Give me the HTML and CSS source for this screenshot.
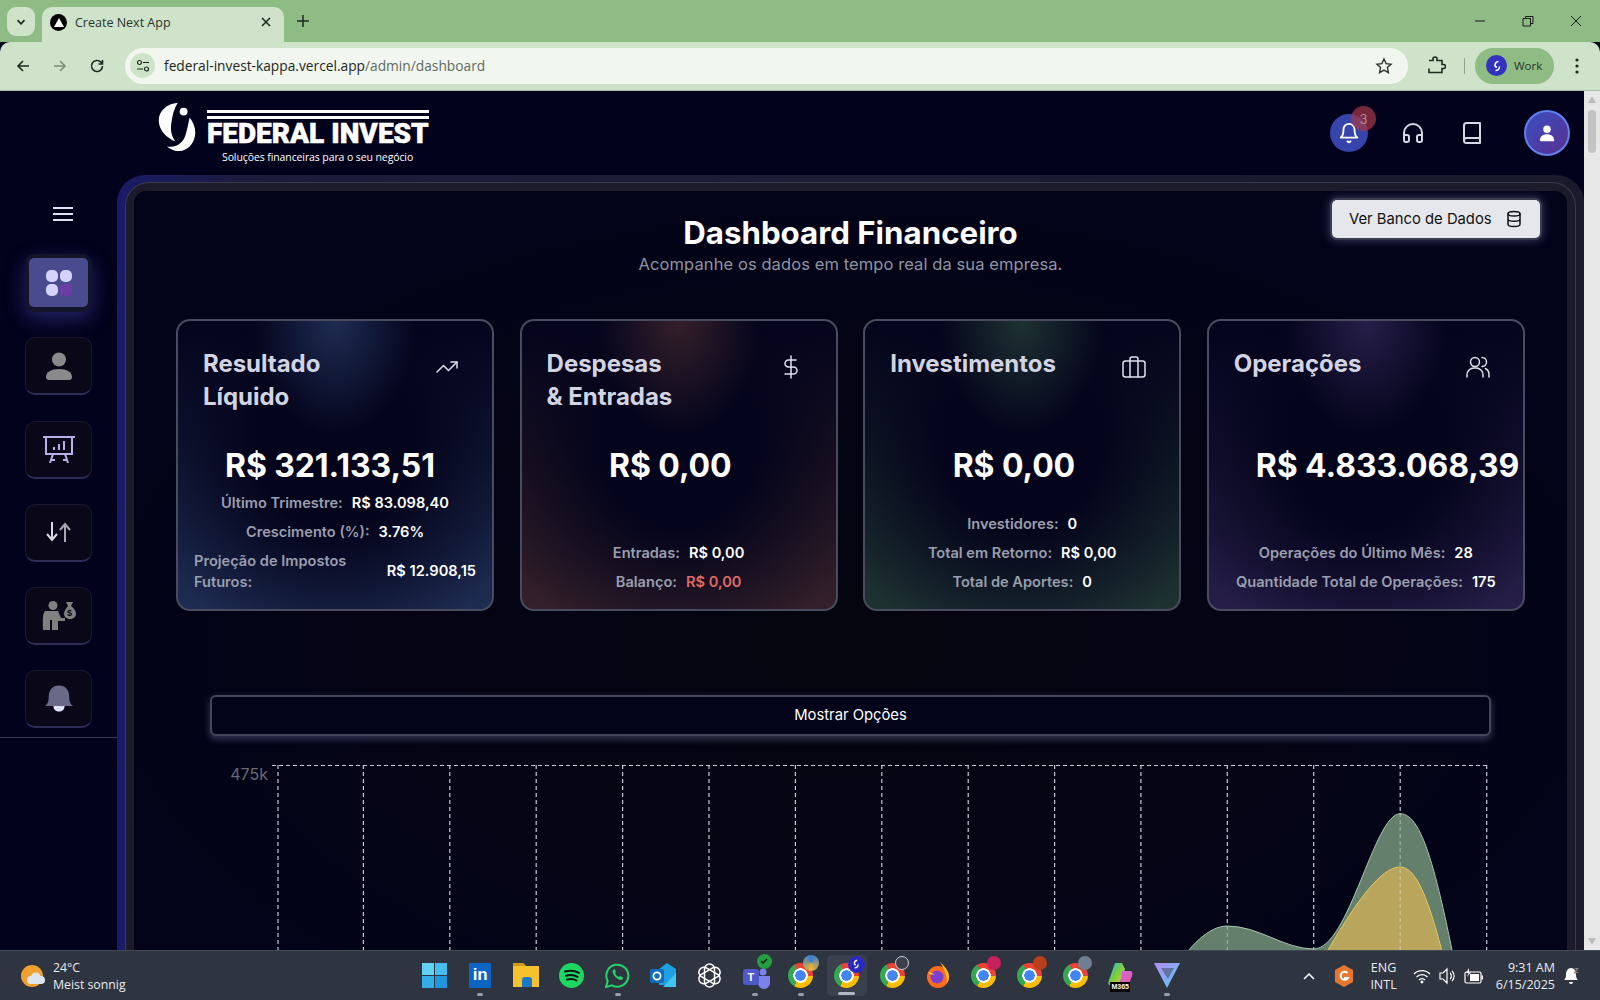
FILE: index.html
```html
<!DOCTYPE html>
<html lang="pt-BR">
<head>
<meta charset="utf-8">
<title>Create Next App</title>
<link rel="stylesheet" href="styles.css">
</head>
<body>
<div class="tabstrip">
  <div class="tab-switch"><svg width="12" height="12" viewBox="0 0 12 12"><path d="M2.500 4.200 6 7.800l3.500-3.600" fill="none" stroke="#1f2a1f" stroke-width="1.700"/></svg></div>
  <div class="tab">
    <span class="favicon"><svg width="10" height="9" viewBox="0 0 10 9"><path d="M5 0l5 9H0z" fill="#fff"/></svg></span>
    <span class="tab-title">Create Next App</span>
    <svg class="tab-close" width="10" height="10" viewBox="0 0 10 10"><path d="M1 1l8 8M9 1l-8 8" stroke="#1d2a1d" stroke-width="1.600"/></svg>
  </div>
  <svg class="tab-plus" width="12" height="12" viewBox="0 0 12 12"><path d="M6 0v12M0 6h12" stroke="#1d2a1d" stroke-width="1.500"/></svg>
  <div class="win-controls">
    <svg width="12" height="12" viewBox="0 0 12 12"><path d="M1 6h10" stroke="#1a1a1a" stroke-width="1"/></svg>
    <svg width="12" height="12" viewBox="0 0 12 12"><path d="M1 3.500h7.500V11H1z M3.500 3.500V1.500H11V8.500H8.500" fill="none" stroke="#1a1a1a" stroke-width="1"/></svg>
    <svg width="12" height="12" viewBox="0 0 12 12"><path d="M1 1l10 10M11 1L1 11" stroke="#1a1a1a" stroke-width="1"/></svg>
  </div>
</div>
<div class="toolbar">
  <svg class="nav-icon" width="16" height="16" viewBox="0 0 16 16"><path d="M14 8H3M8 3L3 8l5 5" fill="none" stroke="#1f2a1f" stroke-width="1.600"/></svg>
  <svg class="nav-icon" width="16" height="16" viewBox="0 0 16 16"><path d="M2 8h11M8 3l5 5-5 5" fill="none" stroke="#7d8f7a" stroke-width="1.600"/></svg>
  <svg class="nav-icon" width="16" height="16" viewBox="0 0 16 16"><path d="M13.500 8a5.500 5.500 0 1 1-1.600-3.900L13.500 6M13.500 2v4h-4" fill="none" stroke="#1f2a1f" stroke-width="1.600"/></svg>
  <div class="urlbar">
    <span class="site-info"><svg width="14" height="14" viewBox="0 0 14 14"><circle cx="3.500" cy="3.500" r="2" fill="none" stroke="#1f2a1f" stroke-width="1.200"/><path d="M7 3.500h6M1 10h6" stroke="#1f2a1f" stroke-width="1.200"/><circle cx="10.500" cy="10" r="2" fill="none" stroke="#1f2a1f" stroke-width="1.200"/></svg></span>
    <span class="url"><span class="url-host">federal-invest-kappa.vercel.app</span><span class="url-path">/admin/dashboard</span></span>
    <svg class="star" width="18" height="18" viewBox="0 0 18 18"><path d="M9 2l2.100 4.600 5 .6-3.700 3.400 1 5L9 13.100 4.600 15.600l1-5L1.900 7.200l5-.6z" fill="none" stroke="#2a352a" stroke-width="1.400"/></svg>
  </div>
  <svg class="puzzle" width="20" height="20" viewBox="0 0 20 20"><path d="M3 5h4V3.500a2 2 0 0 1 4 0V5h5v4h1.500a2 2 0 0 1 0 4H16v4H3v-4" fill="none" stroke="#1f2a1f" stroke-width="1.600" transform="translate(0 -.5)"/></svg>
  <span class="tool-sep"></span>
  <div class="work-pill">
    <span class="work-avatar"><svg width="12" height="12" viewBox="0 0 12 12"><path d="M7.500 1.500A4 4 0 0 0 4 5.500c0 1 1 1.500 2 1.500M4.500 10.500A4 4 0 0 0 8.500 6.500" fill="none" stroke="#fff" stroke-width="1.600"/></svg></span>
    <span class="work-text">Work</span>
  </div>
  <svg class="dots" width="4" height="16" viewBox="0 0 4 16"><circle cx="2" cy="2" r="1.600" fill="#1f2a1f"/><circle cx="2" cy="8" r="1.600" fill="#1f2a1f"/><circle cx="2" cy="14" r="1.600" fill="#1f2a1f"/></svg>
</div>

<div class="viewport">
  <div class="page">
    <header class="topbar">
      <div class="logo">
        <svg class="logo-mark" width="40" height="53" viewBox="20 30 120 160">
          <path d="M82 35C50 38 24 60 25 90c1 30 24 50 50 62-13-17-15-36-12-56 3-22 8-43 19-61z" fill="#fff"/>
          <path d="M118 80c16 20 22 44 13 67-13 33-48 47-82 20 32 6 52-14 58-38 4-16 8-32 11-49z" fill="#fff"/>
          <circle cx="100" cy="62" r="12" fill="#fff"/>
        </svg>
        <div class="logo-text">
          <span class="logo-bar"></span>
          <span class="logo-bar"></span>
          <span class="logo-name">FEDERAL INVEST</span>
          <span class="logo-tag">Soluções financeiras para o seu negócio</span>
        </div>
      </div>
      <div class="top-actions">
        <div class="bell-btn">
          <svg width="22" height="22" viewBox="0 0 24 24" fill="none" stroke="#fff" stroke-width="2" stroke-linecap="round" stroke-linejoin="round"><path d="M6 8a6 6 0 0 1 12 0c0 7 3 9 3 9H3s3-2 3-9"/><path d="M10.300 21a1.900 1.900 0 0 0 3.400 0"/></svg>
          <span class="bell-badge">3</span>
        </div>
        <svg class="act-head" width="24" height="24" viewBox="0 0 24 24" fill="none" stroke="#d5d8e6" stroke-width="2" stroke-linecap="round" stroke-linejoin="round"><path d="M3 14h3a2 2 0 0 1 2 2v3a2 2 0 0 1-2 2H5a2 2 0 0 1-2-2v-7a9 9 0 0 1 18 0v7a2 2 0 0 1-2 2h-1a2 2 0 0 1-2-2v-3a2 2 0 0 1 2-2h3"/></svg>
        <svg class="act-book" width="24" height="24" viewBox="0 0 24 24" fill="none" stroke="#d5d8e6" stroke-width="2" stroke-linecap="round" stroke-linejoin="round"><path d="M4 19.500v-15A2.500 2.500 0 0 1 6.500 2H20v20H6.500a2.500 2.500 0 0 1 0-5H20"/></svg>
        <div class="avatar"><svg width="20" height="20" viewBox="0 0 24 24" fill="#fff"><circle cx="12" cy="7.500" r="4.500"/><path d="M3.500 21c0-5 3.500-7.500 8.500-7.500s8.500 2.500 8.500 7.500c0 .5-.5 1-1 1h-15c-.5 0-1-.5-1-1z"/></svg></div>
      </div>
    </header>

    <div class="workspace">
      <nav class="sidebar">
        <svg class="burger" width="20" height="16" viewBox="0 0 20 16"><path d="M0 2h20M0 8h20M0 14h20" stroke="#dfe2f2" stroke-width="2"/></svg>
        <div class="side-list">
          <div class="side-btn side-btn-active">
            <div class="side-active-inner">
              <svg width="26" height="26" viewBox="0 0 26 26"><rect x="0" y="0" width="12" height="12" rx="5" fill="#d6d2ff"/><rect x="14" y="0" width="12" height="12" rx="5" fill="#d6d2ff"/><rect x="0" y="14" width="12" height="12" rx="5" fill="#d6d2ff"/><rect x="14" y="14" width="12" height="12" rx="4" fill="#6a3ea6"/></svg>
            </div>
          </div>
          <div class="side-btn"><svg width="26" height="28" viewBox="0 0 26 28" fill="#8a8a8a"><circle cx="13" cy="7.500" r="7"/><path d="M0 25c0-5 5-8 13-8s13 3 13 8c0 2-1 3-3 3H3c-2 0-3-1-3-3z"/></svg></div>
          <div class="side-btn"><svg width="32" height="27" viewBox="0 0 32 27" fill="none" stroke="#b8b0ea" stroke-width="2"><path d="M0 1h32M3 1v17h26V1M10 18l-3 9M22 18l3 9M8 24h4M20 24h4"/><path d="M11 14v-3M16 14V8M21 14V5" stroke-width="2"/></svg></div>
          <div class="side-btn"><svg width="25" height="20" viewBox="0 0 25 20" fill="none" stroke-width="2"><path d="M6 0v18M1 12l5 6 5-6" stroke="#d8d8e0"/><path d="M19 20V2M14 8l5-6 5 6" stroke="#a9a9b2"/></svg></div>
          <div class="side-btn"><svg width="34" height="29" viewBox="0 0 34 29"><circle cx="11" cy="4.500" r="4.500" fill="#808080"/><path d="M3 10h13l3 7h4v3h-7v9H10V19H8v10H1c0-7-1-16 2-19z" fill="#808080"/><path d="M24 1h7l-2 4c3 2 5 5 5 8 0 3-3 5-6 5s-6-2-6-5c0-3 2-6 4-8z" fill="#808080"/><text x="27.500" y="15" class="bag-text">$</text></svg></div>
          <div class="side-btn"><svg width="28" height="27" viewBox="0 0 30 28"><path d="M15 0c7 0 11 5 11 12 0 5 1 8 4 10H0c3-2 4-5 4-10C4 5 8 0 15 0z" fill="#6a6a88"/><path d="M9 22h12c0 4-3 6-6 6s-6-2-6-6z" fill="#dfe4ff"/></svg></div>
        </div>
        <div class="side-rule"></div>
      </nav>

      <section class="panel">
        <div class="frame">
          <main class="inner">
            <div class="title-row">
              <span></span>
              <div class="title-block">
                <h1 class="title">Dashboard Financeiro</h1>
                <p class="subtitle">Acompanhe os dados em tempo real da sua empresa.</p>
              </div>
              <button class="db-btn">Ver Banco de Dados
                <svg width="18" height="18" viewBox="0 0 24 24" fill="none" stroke="#111" stroke-width="2" stroke-linecap="round"><ellipse cx="12" cy="5" rx="8" ry="3"/><path d="M4 5v14c0 1.700 3.600 3 8 3s8-1.300 8-3V5M4 12c0 1.700 3.600 3 8 3s8-1.300 8-3"/></svg>
              </button>
            </div>

            <div class="cards">
              <article class="card card-blue">
                <div class="card-head">
                  <h2 class="card-title">Resultado<br>Líquido</h2>
                  <svg class="card-icon" width="24" height="24" viewBox="0 0 24 24" fill="none" stroke="#e0e2ee" stroke-width="1.500" stroke-linecap="round" stroke-linejoin="round"><path d="M22 7l-8.500 8.500-5-5L2 17"/><path d="M16 7h6v6"/></svg>
                </div>
                <div class="card-value value-wide">R$ 321.133,51</div>
                <div class="rows">
                  <div class="row"><span class="lbl">Último Trimestre:</span><span class="val">R$ 83.098,40</span></div>
                  <div class="row"><span class="lbl">Crescimento (%):</span><span class="val">3.76%</span></div>
                  <div class="row row-split"><span class="lbl">Projeção de Impostos<br>Futuros:</span><span class="val">R$ 12.908,15</span></div>
                </div>
              </article>

              <article class="card card-red">
                <div class="card-head">
                  <h2 class="card-title">Despesas<br>&amp; Entradas</h2>
                  <svg class="card-icon" width="24" height="24" viewBox="0 0 24 24" fill="none" stroke="#e0e2ee" stroke-width="1.500" stroke-linecap="round" stroke-linejoin="round"><path d="M12 1v22"/><path d="M17 5H9.500a3.500 3.500 0 0 0 0 7h5a3.500 3.500 0 0 1 0 7H6"/></svg>
                </div>
                <div class="card-value value-short">R$ 0,00</div>
                <div class="rows">
                  <div class="row"><span class="lbl">Entradas:</span><span class="val">R$ 0,00</span></div>
                  <div class="row"><span class="lbl">Balanço:</span><span class="val val-neg">R$ 0,00</span></div>
                </div>
              </article>

              <article class="card card-green">
                <div class="card-head">
                  <h2 class="card-title">Investimentos</h2>
                  <svg class="card-icon" width="24" height="24" viewBox="0 0 24 24" fill="none" stroke="#e0e2ee" stroke-width="1.500" stroke-linecap="round" stroke-linejoin="round"><rect x="1" y="6" width="22" height="16" rx="2.500"/><path d="M16 22V4a2 2 0 0 0-2-2h-4a2 2 0 0 0-2 2v18"/></svg>
                </div>
                <div class="card-value value-short">R$ 0,00</div>
                <div class="rows">
                  <div class="row"><span class="lbl">Investidores:</span><span class="val">0</span></div>
                  <div class="row"><span class="lbl">Total em Retorno:</span><span class="val">R$ 0,00</span></div>
                  <div class="row"><span class="lbl">Total de Aportes:</span><span class="val">0</span></div>
                </div>
              </article>

              <article class="card card-purple">
                <div class="card-head">
                  <h2 class="card-title">Operações</h2>
                  <svg class="card-icon" width="24" height="24" viewBox="0 0 24 24" fill="none" stroke="#e0e2ee" stroke-width="1.500" stroke-linecap="round" stroke-linejoin="round"><circle cx="9" cy="7" r="4.500"/><path d="M1 22v-2a7 7 0 0 1 7-7h2a7 7 0 0 1 7 7v2"/><path d="M16 2.500a4.500 4.500 0 0 1 0 9"/><path d="M19.500 13.500A7 7 0 0 1 23 20v2"/></svg>
                </div>
                <div class="card-value value-wide">R$ 4.833.068,39</div>
                <div class="rows">
                  <div class="row"><span class="lbl">Operações do Último Mês:</span><span class="val">28</span></div>
                  <div class="row"><span class="lbl">Quantidade Total de Operações:</span><span class="val">175</span></div>
                </div>
              </article>
            </div>

            <button class="options-btn">Mostrar Opções</button>

            <svg class="chart" width="1433" height="300" viewBox="0 0 1433 300">
              <path d="M138 14.500H1352.700" class="grid-line"/>
              <path d="M144 14V300M229.400 14V300M315.800 14V300M402.200 14V300M488.600 14V300M575 14V300M661.400 14V300M747.800 14V300M834.200 14V300M920.600 14V300M1006.900 14V300M1093.300 14V300M1179.700 14V300M1266.200 14V300M1352.700 14V300" class="grid-line"/>
              <text x="134" y="29" class="axis-label">475k</text>
              <path d="M1040 220C1055 195 1075 175 1093.300 175C1125 175 1150 198 1179.700 198C1215 198 1240 62.700 1266.200 62.700C1290 62.700 1305 130 1330 260V300H1040Z" class="area-green"/>
              <path d="M1170 240C1205 180 1240 116 1266.200 116C1285 116 1300 160 1322 260L1330 300H1170Z" class="area-yellow"/>
              <path d="M1093.300 175V300M1179.700 198V300M1266.200 62V300" class="grid-line grid-faint"/>
            </svg>
          </main>
        </div>
      </section>
    </div>
  </div>
  <div class="scrollbar">
    <span class="scroll-up"></span>
    <span class="scroll-thumb"></span>
    <span class="scroll-down"></span>
  </div>
</div>

<footer class="taskbar">
  <div class="weather">
    <svg width="26" height="26" viewBox="0 0 26 26"><circle cx="12" cy="13" r="11" fill="#f0a030"/><path d="M11 21a4 4 0 0 1 0-8 5 5 0 0 1 9.500 0 4 4 0 0 1 1 8z" fill="#dfe5ef"/></svg>
    <div class="weather-text"><span>24°C</span><span>Meist sonnig</span></div>
  </div>
  <div class="task-icons">
    <div class="task-cell"><svg width="25" height="25" viewBox="0 0 25 25"><path d="M0 0h12v12H0z" fill="#63d1f5"/><path d="M13 0h12v12H13z" fill="#45bdf0"/><path d="M0 13h12v12H0z" fill="#32ade8"/><path d="M13 13h12v12H13z" fill="#1f97dd"/></svg></div>
    <div class="task-cell task-open"><span class="tile-in">in</span></div>
    <div class="task-cell"><svg width="26" height="24" viewBox="0 0 26 24"><path d="M0 0h10l3 3h13v21H0z" fill="#f5c22e"/><path d="M0 0h10l3 3H0z" fill="#d49a1a"/><path d="M9 17q0-3 3-3h4q3 0 3 3v7H9z" fill="#1b78c8"/></svg></div>
    <div class="task-cell"><svg width="25" height="25" viewBox="0 0 25 25"><circle cx="12.500" cy="12.500" r="12.500" fill="#1ed760"/><path d="M6 8.500c5-1.300 10-1 14 1.300M7 12.700c4-1 8.500-.6 11.500 1.200M8 16.500c3.500-.8 7-.5 9.500 1" fill="none" stroke="#111" stroke-width="2" stroke-linecap="round"/></svg></div>
    <div class="task-cell task-open"><svg width="25" height="25" viewBox="0 0 25 25"><path d="M1 24l1.700-6A11 11 0 1 1 7 22.300z" fill="none" stroke="#25d366" stroke-width="2"/><path d="M8 7c-1 2 0 5 3 7.500s5 3 6.500 2l.5-2-3-1.500-1 1c-2-.8-3-2-4-4l1-1-1.300-3z" fill="#25d366"/></svg></div>
    <div class="task-cell"><svg width="26" height="24" viewBox="0 0 26 24"><path d="M9 6l8-6 9 6v16H9z" fill="#1fa0e0"/><path d="M13 24h13V10z" fill="#41c5f2"/><rect x="0" y="6" width="14" height="14" rx="2" fill="#0f6cbd"/><circle cx="7" cy="13" r="3.600" fill="none" stroke="#fff" stroke-width="1.800"/></svg></div>
    <div class="task-cell"><svg width="25" height="25" viewBox="0 0 25 25" fill="none" stroke="#fff" stroke-width="1.500"><rect x="7.500" y="1" width="10" height="23" rx="5"/><rect x="7.500" y="1" width="10" height="23" rx="5" transform="rotate(60 12.500 12.500)"/><rect x="7.500" y="1" width="10" height="23" rx="5" transform="rotate(120 12.500 12.500)"/></svg></div>
    <div class="task-cell task-open"><svg class="teams-back" width="24" height="22" viewBox="0 0 24 22"><circle cx="17" cy="5" r="3.500" fill="#7b83eb"/><path d="M9 9h15v7a6 6 0 0 1-12 0z" fill="#7b83eb"/></svg><span class="tile-teams">T</span><span class="teams-check"><svg width="10" height="10" viewBox="0 0 10 10"><path d="M2 5l2 2 4-4" fill="none" stroke="#111" stroke-width="1.300"/></svg></span></div>
    <div class="task-cell task-open"><span class="chrome"></span><span class="mini-badge badge-multi"></span></div>
    <div class="task-cell task-open task-active"><span class="chrome"></span><span class="mini-badge badge-work"><svg width="10" height="10" viewBox="0 0 12 12"><path d="M7.500 1.500A4 4 0 0 0 4 5.500c0 1 1 1.500 2 1.500M4.500 10.500A4 4 0 0 0 8.500 6.500" fill="none" stroke="#fff" stroke-width="1.600"/></svg></span></div>
    <div class="task-cell"><span class="chrome"></span><span class="mini-badge badge-grey"></span></div>
    <div class="task-cell"><svg width="24" height="26" viewBox="0 0 24 26"><circle cx="12" cy="15" r="11" fill="#ff6b1a"/><path d="M14 0c4 4 9 8 9 15 0 3-1 5-2 6 0-8-3-14-7-21z" fill="#ffb62e"/><circle cx="11" cy="15" r="6.500" fill="#7b3fd1"/><path d="M2 10c3 0 4 2 7 2-2 1-5 1-7-2z" fill="#ffd23e"/></svg></div>
    <div class="task-cell"><span class="chrome"></span><span class="mini-badge badge-pink"></span></div>
    <div class="task-cell"><span class="chrome"></span><span class="mini-badge badge-rust"></span></div>
    <div class="task-cell"><span class="chrome"></span><span class="mini-badge badge-arrow"></span></div>
    <div class="task-cell"><svg width="26" height="24" viewBox="0 0 26 24"><defs><linearGradient id="cp" x1="0" y1="0" x2="1" y2="1"><stop offset="0" stop-color="#19b5e8"/><stop offset=".5" stop-color="#7bcf3f"/><stop offset="1" stop-color="#f5c63a"/></linearGradient><linearGradient id="cq" x1="0" y1="0" x2="1" y2="1"><stop offset="0" stop-color="#c76be0"/><stop offset="1" stop-color="#f2559e"/></linearGradient></defs><path d="M7 0h7l3 6-6 16H2C0 22 0 20 1 17z" fill="url(#cp)"/><path d="M14 8h8c2 0 3 2 2 5l-3 8h-9z" fill="url(#cq)"/></svg><span class="m365">M365</span></div>
    <div class="task-cell task-open"><svg width="26" height="26" viewBox="0 0 26 26"><defs><linearGradient id="vg" x1="0" y1="0" x2="1" y2="1"><stop offset="0" stop-color="#b48cf5"/><stop offset="1" stop-color="#5cc8f5"/></linearGradient></defs><path d="M0 1h26L13 26z" fill="url(#vg)"/><path d="M7 6h13l-6 11z" fill="#2e3440" opacity=".45"/></svg></div>
  </div>
  <div class="tray">
    <svg class="tray-chev" width="12" height="8" viewBox="0 0 12 8"><path d="M1 7l5-5 5 5" fill="none" stroke="#fff" stroke-width="1.500"/></svg>
    <svg class="tray-orange" width="18" height="22" viewBox="0 0 18 22"><path d="M9 0l9 5v12l-9 5-9-5V5z" fill="#e8772e"/><path d="M12.500 8A4 4 0 1 0 13 13H9" fill="none" stroke="#fff" stroke-width="2"/></svg>
    <div class="tray-lang"><span>ENG</span><span>INTL</span></div>
    <svg class="tray-wifi" width="18" height="16" viewBox="0 0 18 16" fill="none" stroke="#fff" stroke-width="1.300"><path d="M1 6a11 11 0 0 1 16 0M3.500 9a7.500 7.500 0 0 1 11 0M6 12a4 4 0 0 1 6 0"/><circle cx="9" cy="14" r=".8" fill="#fff"/></svg>
    <svg class="tray-sound" width="18" height="18" viewBox="0 0 18 18" fill="none" stroke="#fff" stroke-width="1.200"><path d="M1 6h3l4-4v14l-4-4H1zM11 6a4 4 0 0 1 0 6M13 4a7 7 0 0 1 0 10"/></svg>
    <svg class="tray-batt" width="20" height="18" viewBox="0 0 20 18"><rect x="1" y="5" width="16" height="11" rx="1.500" fill="none" stroke="#fff" stroke-width="1.200"/><rect x="6" y="7" width="9" height="7" fill="#fff"/><path d="M17.500 8.500h1.500v4h-1.500" fill="#fff"/><path d="M5 1L2 6h2.500L3 10l4-5H5z" fill="#fff"/></svg>
    <div class="tray-clock"><span>9:31 AM</span><span>6/15/2025</span></div>
    <svg class="tray-bell" width="18" height="20" viewBox="0 0 18 20"><path d="M8 2C4 2 3 6 3 9c0 3-1 4-2 5h14c-1-1-2-2-2-5 0-3-1-7-5-7z" fill="#fff"/><path d="M6 16h4a2 2 0 0 1-4 0z" fill="#fff"/><text x="11" y="7" class="zz-text">Z</text></svg>
  </div>
</footer>
</body>
</html>
```
FILE: styles.css
```css
* { box-sizing: border-box; }
html, body { margin: 0; height: 100%; }
body {
  width: 1600px; height: 1000px; overflow: hidden;
  display: flex; flex-direction: column;
  font-family: Inter, "Liberation Sans", sans-serif;
  background: #02021a;
}

/* browser chrome */
.tabstrip {
  height: 42px; flex: none; background: #8fbc85;
  display: flex; align-items: flex-end; padding-left: 7px;
  font-family: "Open Sans", "Liberation Sans", sans-serif;
}
.tab-switch {
  width: 28px; height: 29px; margin-bottom: 6px; border-radius: 9px;
  background: #cfe3cb; display: flex; align-items: center; justify-content: center;
}
.tab {
  width: 242px; height: 35px; margin-left: 7px; background: #cfe3cb;
  border-radius: 10px 10px 0 0; display: flex; align-items: center;
  padding: 0 13px 5px 8px;
}
.favicon {
  width: 17px; height: 17px; border-radius: 50%; background: #000;
  display: flex; align-items: center; justify-content: center;
}
.tab-title { font-size: 12.500px; color: #2b342b; margin-left: 8px; flex: 1; }
.tab-plus { margin: 0 0 15px 13px; }
.win-controls { margin-left: auto; display: flex; gap: 36px; padding-right: 18px; margin-bottom: 15px; }

.toolbar {
  height: 49px; flex: none; background: #cfe3cb; border-bottom: 1px solid #a9bda6;
  display: flex; align-items: center; padding: 0 0 1px 15px;
  border-radius: 10px 10px 0 0;
  font-family: "Open Sans", "Liberation Sans", sans-serif;
}
.nav-icon { margin-right: 21px; }
.nav-icon:nth-child(3) { margin-right: 20px; }
.urlbar {
  width: 1283px; height: 36px; border-radius: 18px; background: #f1f7ef;
  display: flex; align-items: center; padding: 0 15px 0 5px;
}
.site-info {
  width: 25px; height: 25px; border-radius: 50%; background: #cfe3cb;
  display: flex; align-items: center; justify-content: center;
}
.url { margin-left: 9px; font-size: 13.750px; flex: 1; }
.url-host { color: #1e261e; }
.url-path { color: #5e6b5e; }
.puzzle { margin-left: 18px; }
.tool-sep { width: 1px; height: 16px; background: #8fa48c; margin-left: 18px; }
.work-pill {
  width: 79px; height: 36px; border-radius: 18px; background: #8fbc85; margin-left: 10px;
  display: flex; align-items: center; padding-left: 11px; gap: 7px;
}
.work-avatar {
  width: 21px; height: 21px; border-radius: 50%; background: #3232bf;
  display: flex; align-items: center; justify-content: center;
}
.work-text { font-size: 11.500px; color: #2a332a; }
.dots { margin-left: 21px; }

/* viewport */
.viewport { flex: none; height: 859px; display: flex; overflow: hidden; }
.page { flex: 1; min-width: 0; display: flex; flex-direction: column; background: #02021c; overflow: hidden; }
.scrollbar { width: 16px; flex: none; background: #e7e7e7; display: flex; flex-direction: column; align-items: center; }
.scroll-up, .scroll-down { width: 0; height: 0; border-left: 4.500px solid transparent; border-right: 4.500px solid transparent; }
.scroll-up { border-bottom: 7px solid #bdbdbd; margin-top: 5px; }
.scroll-thumb { width: 8px; height: 43px; border-radius: 4px; background: #c3c3c3; margin-top: 7px; }
.scroll-down { border-top: 7px solid #bdbdbd; margin-top: auto; margin-bottom: 5px; }

/* header */
.topbar { height: 84px; flex: none; display: flex; justify-content: space-between; padding: 9px 14px 0 157px; }
.logo { display: flex; gap: 10px; }
.logo-mark { margin-top: 1px; }
.logo-text { display: flex; flex-direction: column; width: 222px; padding-top: 10px; }
.logo-bar { height: 3px; background: #fff; margin-bottom: 3px; }
.logo-name {
  font-family: Roboto, "Liberation Sans", sans-serif; font-weight: 900; font-size: 28px; line-height: 24px;
  color: #fff; white-space: nowrap; -webkit-text-stroke: .5px #fff;
}
.logo-tag {
  font-family: "Open Sans", sans-serif; font-size: 10.500px; line-height: 14px; color: #fff; white-space: nowrap;
  margin: 4px 0 0 15px; letter-spacing: -.1px;
}
.top-actions { display: flex; align-items: center; height: 46px; margin-top: 10px; }
.bell-btn {
  width: 38px; height: 38px; border-radius: 50%; background: #3645ac; position: relative;
  display: flex; align-items: center; justify-content: center;
}
.bell-badge {
  position: absolute; right: -8px; top: -8px; width: 25px; height: 25px; border-radius: 50%;
  background: rgba(165, 55, 70, .72); color: #b08a98; font-size: 13px;
  display: flex; align-items: center; justify-content: center;
}
.act-head { margin-left: 33px; }
.act-book { margin-left: 35px; }
.avatar {
  width: 46px; height: 46px; border-radius: 50%; margin-left: 40px;
  background: linear-gradient(135deg, #3a4fc0, #5a2f90); border: 2px solid #5f82ee;
  display: flex; align-items: center; justify-content: center;
}

/* workspace */
.workspace { flex: 1; min-height: 0; display: flex; }
.sidebar { width: 117px; flex: none; display: flex; flex-direction: column; align-items: flex-start; }
.burger { margin: 31px 0 0 53px; }
.side-list { display: flex; flex-direction: column; gap: 25.300px; margin: 32px 0 0 25px; }
.side-btn {
  width: 67px; height: 58px; border-radius: 10px; background: #0a0818;
  border: 1px solid #1a1830; border-bottom: 2px solid #2f2c58;
  display: flex; align-items: center; justify-content: center;
}
.side-btn-active {
  background: #14142a; border: none; padding: 4px 4px 5px; align-items: stretch; justify-content: stretch;
  box-shadow: 0 7px 20px 0 rgba(90, 90, 225, .38);
}
.side-active-inner {
  flex: 1; border-radius: 5px; background: #4a4a8e;
  display: flex; align-items: center; justify-content: center;
}
.bag-text { font-family: "Liberation Sans", sans-serif; font-size: 9px; font-weight: 700; fill: #0a0818; text-anchor: middle; }
.side-rule { width: 117px; height: 1px; background: #3a3a58; margin-top: 9px; }

/* panel */
.panel {
  flex: 1; min-width: 0; padding: 7px 0 0 8px; border-radius: 28px 28px 0 0;
  background: linear-gradient(90deg, #1a1a68 0, #1c1c3a 10%, #1a1a2c 100%);
}
.frame {
  height: 100%; padding: 8px 8px 0 8px; border: 1px solid #3a3a4e; border-bottom: none; border-radius: 24px 24px 0 0;
  background: #1b1b2b; margin-right: 8px;
}
.inner {
  height: 900px; padding-top: 9px; border-radius: 12px 12px 0 0;
  background: radial-gradient(ellipse 60% 55% at 50% 50%, #05050f 0, #03031a 100%);
}
.title-row { display: grid; grid-template-columns: 1fr auto 1fr; padding: 0 27px; }
.title-block { text-align: center; padding-top: 15px; }
.title { margin: 0; font-size: 31.250px; line-height: 36px; font-weight: 700; color: #fff; }
.subtitle { margin: 1px 0 0; font-size: 16.500px; line-height: 24px; color: #8f93a3; letter-spacing: .09px; }
.db-btn {
  justify-self: end; width: 208px; height: 38px; border: none; border-radius: 5px; background: #e6e7ec;
  display: flex; align-items: center; justify-content: space-between; padding: 0 17px 0 17px;
  font: 400 14.800px Inter, sans-serif; color: #111; white-space: nowrap;
  box-shadow: 0 0 0 2px #3a3c50, 0 0 8px 3px rgba(150, 155, 200, .35);
}

/* cards */
.cards { display: grid; grid-template-columns: repeat(4, 318px); gap: 25.600px; margin: 42.500px 0 0 42px; }
.card {
  height: 292px; border: 2px solid #484c5e; border-radius: 14px;
  display: flex; flex-direction: column; padding: 26.500px 0 16px;
  background:
    radial-gradient(ellipse 26% 40% at 50% 0, rgba(var(--tint), 1) 0, rgba(var(--tint), 0) 100%),
    radial-gradient(ellipse 64% 76% at 50% 42%, #04041c 38%, rgba(4, 4, 28, 0) 100%),
    linear-gradient(180deg, #04041c 0, rgba(var(--tint), .7) 60%, rgba(var(--tint), 1) 100%);
}
.card-blue { --tint: 30, 44, 82; }
.card-red { --tint: 52, 32, 42; }
.card-green { --tint: 30, 50, 50; }
.card-purple { --tint: 38, 30, 72; }
.card-head { height: 66px; display: flex; justify-content: space-between; padding: 0 33px 0 25px; flex: none; }
.card-title { margin: 0; font-size: 24px; line-height: 33px; font-weight: 700; color: #d2d4e2; letter-spacing: -.04px; }
.card-icon { margin-top: 8px; }
.card-value { margin-top: 33px; font-size: 32px; line-height: 40px; font-weight: 700; color: #fff; white-space: nowrap; letter-spacing: -.1px; }
.value-wide { padding-left: 47px; }
.value-short { padding-left: 87.500px; }
.rows { margin-top: auto; display: flex; flex-direction: column; gap: 8px; padding: 0 16px; }
.row { display: flex; justify-content: center; gap: 9px; font-size: 14.600px; line-height: 21px; font-weight: 600; white-space: nowrap; }
.row-split { justify-content: space-between; align-items: center; }
.lbl { color: #9a9eae; }
.val { color: #fff; }
.val-neg { color: #e06a66; }

/* options + chart */
.options-btn {
  display: block; width: 1281px; height: 41px; margin: 84px 0 0 76px; border: 2px solid #44465a; border-radius: 6px;
  background: #03031a; color: #fff; font: 400 14.800px Inter, sans-serif;
  box-shadow: 0 3px 6px 1px rgba(120, 125, 170, .35);
}
.chart { display: block; margin-top: 15px; }
.grid-line { fill: none; stroke: #c9cad6; stroke-width: 1.200; stroke-dasharray: 4 3; }
.grid-faint { stroke: rgba(230, 232, 240, .45); }
.axis-label { font-family: Inter, sans-serif; font-size: 16px; fill: #6a6a72; text-anchor: end; }
.area-green { fill: #647f6c; stroke: #a9c8b0; stroke-width: 1; }
.area-yellow { fill: #b9a65c; stroke: #e8c85e; stroke-width: 1; }

/* taskbar */
.taskbar {
  height: 50px; flex: none; background: #2e3440; border-top: 1px solid #444a56;
  display: flex; align-items: center;
  font-family: "Open Sans", "Liberation Sans", sans-serif; color: #e9ebef; font-size: 12.300px;
}
.weather { width: 411.500px; flex: none; display: flex; align-items: center; padding-left: 20px; gap: 7px; }
.weather-text { display: flex; flex-direction: column; line-height: 17px; }
.task-icons { display: flex; flex: none; height: 50px; }
.task-cell { width: 45.800px; height: 49px; display: flex; align-items: center; justify-content: center; position: relative; }
.task-open::after {
  content: ""; position: absolute; left: 20px; bottom: 4px; width: 6px; height: 3px; border-radius: 2px; background: #9a9ea8;
}
.task-active { width: 40px; margin: 4px 2.900px 0; height: 41px; background: #3a404c; border-radius: 5px; }
.task-active::after { width: 17px; left: 11.500px; bottom: 1px; background: #b3b7c0; }
.tile-in {
  width: 22px; height: 25px; background: #0a66c2; color: #fff; font: 700 17px "Liberation Sans", sans-serif;
  display: flex; align-items: center; justify-content: center;
}
.teams-back { position: absolute; left: 14px; top: 16px; }
.tile-teams {
  width: 16px; height: 16px; border-radius: 3px; background: #5059c9; color: #fff; font: 700 11px "Liberation Sans", sans-serif;
  display: flex; align-items: center; justify-content: center; position: relative; margin-right: 8px; margin-top: 3px;
}
.teams-check {
  position: absolute; right: 6px; top: 3px; width: 15px; height: 15px; border-radius: 50%; background: #20a040;
  display: flex; align-items: center; justify-content: center;
}
.chrome {
  width: 25px; height: 25px; border-radius: 50%;
  background:
    radial-gradient(circle, #4285f4 0 5px, #fff 5.500px 7px, transparent 7.500px),
    conic-gradient(from -30deg, #ea4335 0 120deg, #fbbc04 120deg 240deg, #34a853 240deg 360deg);
}
.mini-badge { position: absolute; right: 6px; top: 5px; width: 14px; height: 14px; border-radius: 50%; display: flex; align-items: center; justify-content: center; }
.badge-multi { background: conic-gradient(#2f7fd8, #f0b030, #2f7fd8); right: 5px; top: 4px; width: 16px; height: 16px; }
.badge-work { background: #2a2ac0; right: 2px; top: 1px; width: 17px; height: 17px; }
.badge-grey { background: #3a404c; border: 1px solid #cfd3da; }
.badge-pink { background: #c8205a; }
.badge-rust { background: #b8401a; }
.badge-arrow { background: #6f7e92; }
.m365 { position: absolute; left: 12px; bottom: 8px; background: #000; color: #fff; font: 700 7px "Liberation Sans", sans-serif; padding: 0 1px; line-height: 10px; }

.tray { flex: 1; min-width: 0; display: flex; align-items: center; padding-left: 112.500px; }
.tray-orange { margin-left: 20px; }
.tray-lang { width: 40px; margin-left: 11px; display: flex; flex-direction: column; text-align: center; line-height: 17px; font-size: 12.500px; }
.tray-wifi { margin-left: 9px; }
.tray-sound { margin-left: 8px; }
.tray-batt { margin-left: 7px; }
.tray-clock { display: flex; flex-direction: column; text-align: right; line-height: 17px; font-size: 12.500px; margin-left: auto; }
.tray-bell { margin: 0 19px 0 8px; }
.zz-text { font: 700 7px "Liberation Sans", sans-serif; fill: #fff; stroke: #2e3440; stroke-width: .4; }
```
